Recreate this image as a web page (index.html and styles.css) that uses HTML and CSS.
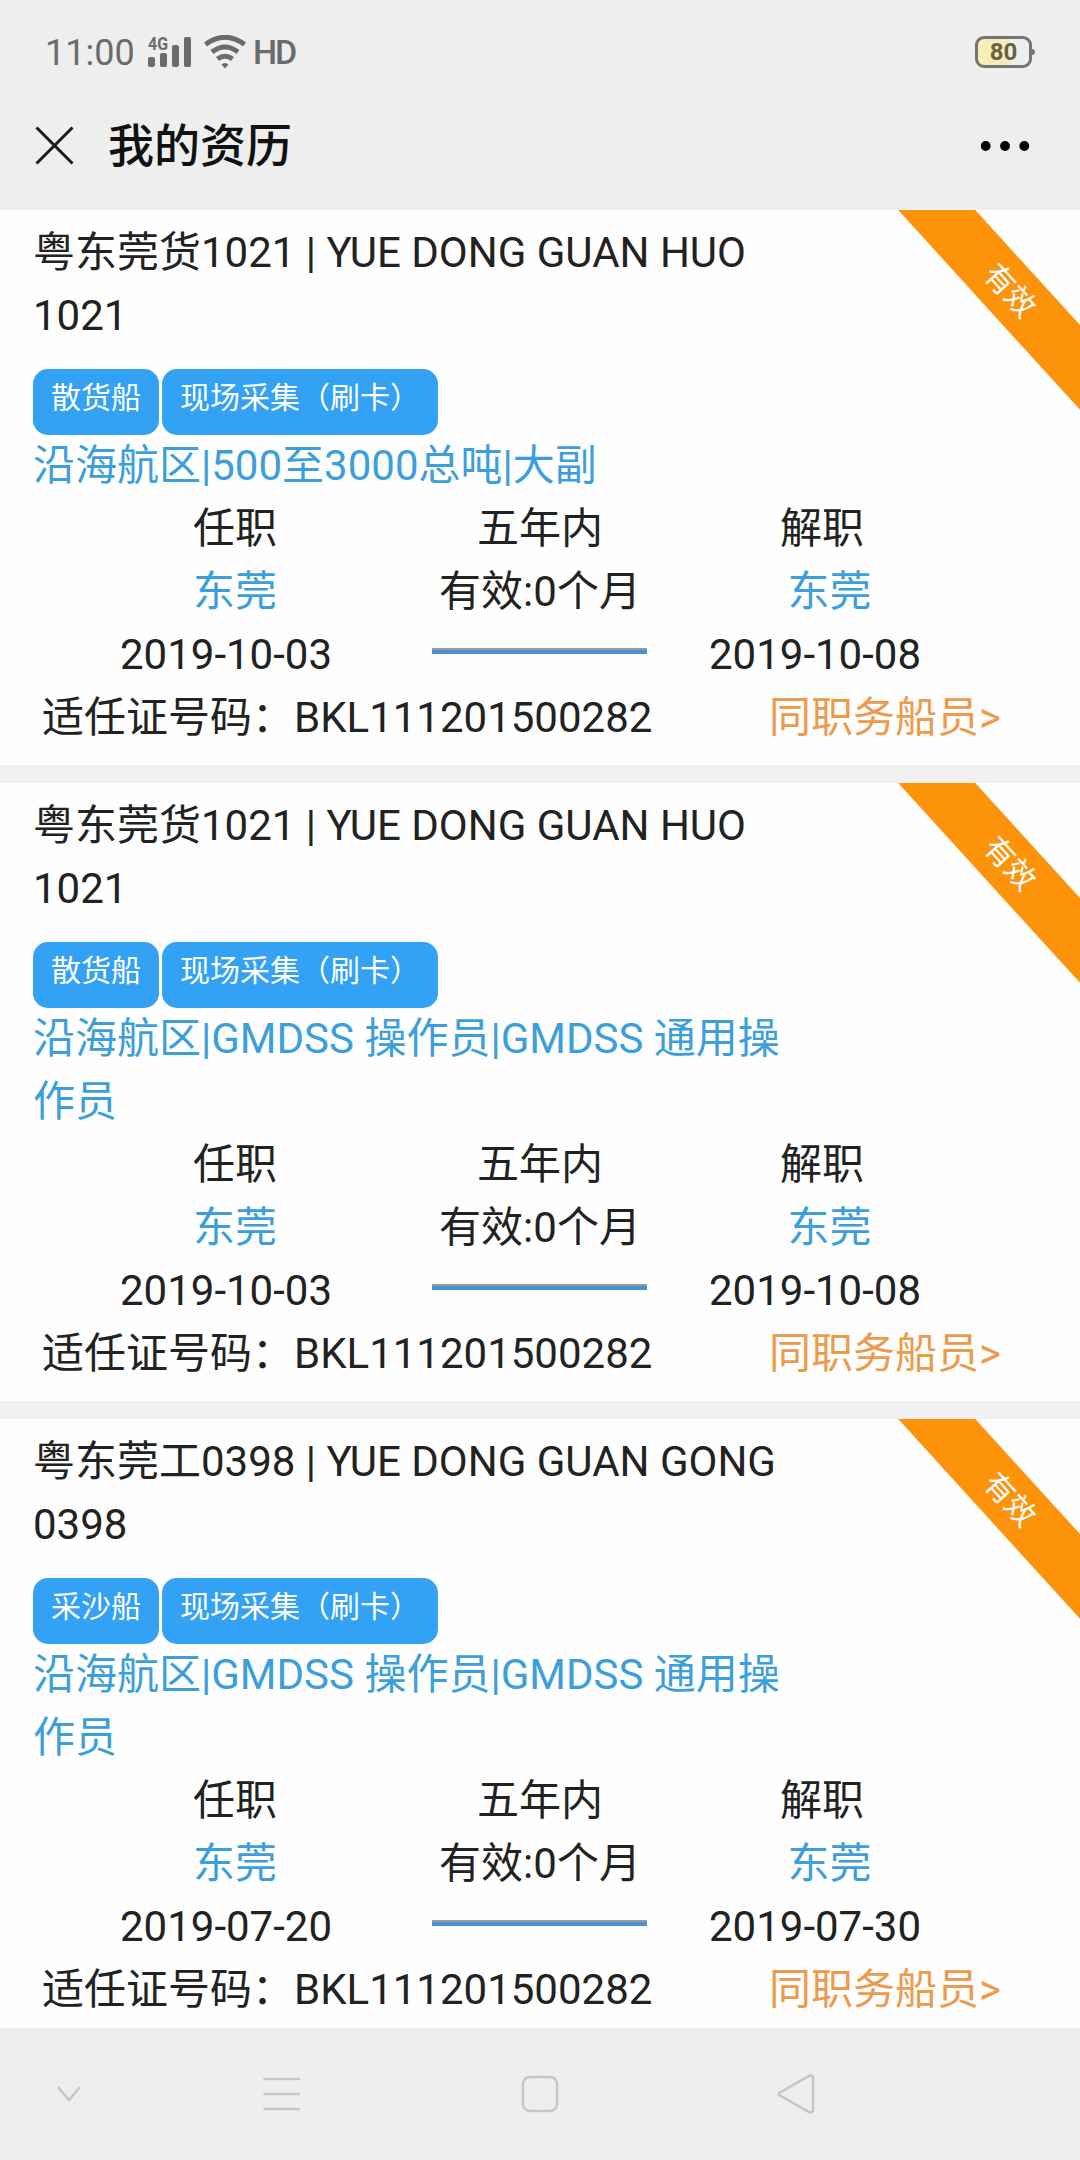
FILE: index.html
```html
<!DOCTYPE html>
<html lang="zh-CN">
<head>
  <meta charset="UTF-8" />
  <meta name="viewport" content="width=device-width, initial-scale=1.0"/>
  <title>我的资历</title>
  <link rel="stylesheet" href="styles.css">
</head>
<body>
  <div class="status-bar">
    <span class="time">11:00</span>
    <svg class="signal" width="44" height="40" viewBox="0 -4 44 40">
      <text x="0" y="14" class="signal-text" textLength="20" lengthAdjust="spacingAndGlyphs">4G</text>
      <rect x="0" y="21" width="7" height="10" rx="2"/>
      <rect x="12" y="17" width="7" height="14" rx="2"/>
      <rect x="24" y="9" width="7" height="22" rx="2"/>
      <rect x="36" y="1" width="7" height="30" rx="2"/>
    </svg>
    <svg class="wifi" width="42" height="34" viewBox="0 0 42 34">
      <path d="M1.5 9.5Q21 -5 40.500 9.500" />
      <path d="M8 17Q21 7 34 17" />
      <path d="M13.500 24Q21 18.500 28.500 24" />
      <path class="dot" d="M17.500 29.500Q21 26.500 24.500 29.500L21 33.500Z" />
    </svg>
    <span class="hd">HD</span>
    <div class="battery">80</div>
  </div>

  <div class="header">
    <svg class="close" width="39" height="39" viewBox="0 0 39 39">
      <path d="M1.500 1.500L37.500 37.500M37.500 1.500L1.500 37.500" />
    </svg>
    <h1>我的资历</h1>
    <svg class="more" width="50" height="12" viewBox="0 0 50 12">
      <circle cx="5.700" cy="6" r="4.900"/>
      <circle cx="25" cy="6" r="4.900"/>
      <circle cx="44.300" cy="6" r="4.900"/>
    </svg>
  </div>

  <div class="list">
    <div class="record">
      <div class="ribbon">有效</div>
      <div class="ship">粤东莞货1021 | YUE DONG GUAN HUO 1021</div>
      <div class="tags"><span class="tag">散货船</span><span class="tag">现场采集（刷卡）</span></div>
      <div class="duty">沿海航区|500至3000总吨|大副</div>
      <div class="term">
        <div class="term-start">
          <div class="label">任职</div>
          <div class="port">东莞</div>
          <div>2019-10-03</div>
        </div>
        <div class="term-mid">
          <div>五年内</div>
          <div>有效:0个月</div>
          <div class="line"></div>
        </div>
        <div class="term-end">
          <div class="label">解职</div>
          <div class="port">东莞</div>
          <div>2019-10-08</div>
        </div>
      </div>
      <div class="cert">
        <span>适任证号码：BKL111201500282</span>
        <a class="crew">同职务船员&gt;</a>
      </div>
    </div>

    <div class="record">
      <div class="ribbon">有效</div>
      <div class="ship">粤东莞货1021 | YUE DONG GUAN HUO 1021</div>
      <div class="tags"><span class="tag">散货船</span><span class="tag">现场采集（刷卡）</span></div>
      <div class="duty">沿海航区|GMDSS 操作员|GMDSS 通用操作员</div>
      <div class="term">
        <div class="term-start">
          <div class="label">任职</div>
          <div class="port">东莞</div>
          <div>2019-10-03</div>
        </div>
        <div class="term-mid">
          <div>五年内</div>
          <div>有效:0个月</div>
          <div class="line"></div>
        </div>
        <div class="term-end">
          <div class="label">解职</div>
          <div class="port">东莞</div>
          <div>2019-10-08</div>
        </div>
      </div>
      <div class="cert">
        <span>适任证号码：BKL111201500282</span>
        <a class="crew">同职务船员&gt;</a>
      </div>
    </div>

    <div class="record">
      <div class="ribbon">有效</div>
      <div class="ship">粤东莞工0398 | YUE DONG GUAN GONG 0398</div>
      <div class="tags"><span class="tag">采沙船</span><span class="tag">现场采集（刷卡）</span></div>
      <div class="duty">沿海航区|GMDSS 操作员|GMDSS 通用操作员</div>
      <div class="term">
        <div class="term-start">
          <div class="label">任职</div>
          <div class="port">东莞</div>
          <div>2019-07-20</div>
        </div>
        <div class="term-mid">
          <div>五年内</div>
          <div>有效:0个月</div>
          <div class="line"></div>
        </div>
        <div class="term-end">
          <div class="label">解职</div>
          <div class="port">东莞</div>
          <div>2019-07-30</div>
        </div>
      </div>
      <div class="cert">
        <span>适任证号码：BKL111201500282</span>
        <a class="crew">同职务船员&gt;</a>
      </div>
    </div>
  </div>

  <div class="nav-bar">
    <svg width="26" height="18" viewBox="0 0 26 18"><path d="M2 2L13 15L24 2"/></svg>
    <svg width="38" height="36" viewBox="0 0 38 36"><path d="M0.500 3H37M0.500 18H37M0.500 33H37"/></svg>
    <svg width="38" height="38" viewBox="0 0 38 38"><rect x="2" y="2" width="34" height="34" rx="7"/></svg>
    <svg width="38" height="40" viewBox="0 0 38 40"><path d="M3 18.500L32 1.800Q36 0.500 36 4V36Q36 39.500 32 38L3 21.500Q0.500 20 3 18.500Z"/></svg>
  </div>
</body>
</html>
```

FILE: styles.css
```css
/* General Styles */
* {
  box-sizing: border-box;
}

body {
  margin: 0;
  width: 1080px;
  height: 2160px;
  display: flex;
  flex-direction: column;
  overflow: hidden;
  font-family: Roboto, "Noto Sans CJK SC", sans-serif;
  font-size: 42px;
  line-height: 63px;
  color: #222;
  background-color: #eee;
}

/* Status Bar */
.status-bar {
  display: flex;
  align-items: center;
  height: 104px;
  padding: 0 48px 0 45px;
  color: #6b6b6b;
}

.time {
  width: 103px;
  padding-top: 2px;
  font-size: 36px;
}

.signal,
.wifi .dot {
  fill: #6b6b6b;
}

.signal-text {
  font-size: 18px;
  font-weight: bold;
}

.wifi {
  margin: 0 7px 0 12px;
  fill: none;
  stroke: #6b6b6b;
  stroke-width: 5;
}

.wifi .dot {
  stroke: none;
}

.hd {
  padding-top: 1px;
  font-size: 34px;
  font-weight: 500;
  letter-spacing: -2px;
}

.battery {
  position: relative;
  width: 57px;
  height: 32px;
  margin-left: auto;
  border: 3px solid #777371;
  border-radius: 9px;
  background: linear-gradient(to right, #f8edb4 0, #f3ecc4 60%, #eee 66%);
  color: #66623a;
  font-size: 24px;
  font-weight: bold;
  line-height: 26px;
  text-align: center;
}

.battery::after {
  content: "";
  position: absolute;
  right: -6px;
  top: 10px;
  width: 4px;
  height: 6px;
  border-radius: 0 3px 3px 0;
  background-color: #777371;
}

/* Header */
.header {
  display: flex;
  align-items: center;
  height: 106px;
  padding: 0 50px 23px 35px;
}

.close {
  stroke: #1a1a1a;
  stroke-width: 3;
}

.header h1 {
  margin: 0 auto 0 34px;
  padding-top: 2px;
  font-size: 46px;
  font-weight: 500;
  color: #111;
}

/* Records */
.list {
  flex: 1;
  min-height: 0;
  overflow: hidden;
  background-color: #f1f1f1;
}

.record {
  position: relative;
  overflow: hidden;
  margin-bottom: 18px;
  padding: 11px 33px 16px;
  background-color: #fefefe;
}

.ribbon {
  position: absolute;
  top: 52px;
  right: -130px;
  width: 400px;
  height: 57px;
  transform: rotate(47.7deg);
  background-color: #fd920b;
  color: #fff;
  font-size: 30px;
  line-height: 57px;
  text-align: center;
}

.ship,
.duty {
  width: 760px;
}

.tags {
  display: flex;
  gap: 3px;
  margin-top: 22px;
}

.tag {
  height: 66px;
  padding: 0 18px;
  border-radius: 15px;
  background-color: #33a1f4;
  color: #fff;
  font-size: 30px;
  line-height: 57px;
}

.duty,
.port {
  color: #3c9fdc;
}

.duty {
  margin-top: -1px;
}

.term {
  display: grid;
  grid-template-columns: 386px 242px 308px;
  text-align: center;
}

.term-start .label,
.term-start .port {
  padding-left: 18px;
}

.term-end .label {
  padding-left: 14px;
}

.term-end .port {
  padding-left: 29px;
}

.line {
  width: 215px;
  height: 6px;
  margin: 25px 0 0 13px;
  border-top: 2px solid #8f9ca8;
  background-color: #4a90cb;
}

.cert {
  display: flex;
  justify-content: space-between;
  padding: 0 46px 0 9px;
}

.crew {
  color: #ee9a4b;
}

/* Navigation Bar */
.nav-bar {
  display: grid;
  grid-template-columns: 137px 290px 225px 288px;
  align-items: center;
  justify-items: center;
  height: 132px;
}

.nav-bar svg {
  fill: none;
  stroke: #c6c6c6;
  stroke-width: 2.5;
}
```
